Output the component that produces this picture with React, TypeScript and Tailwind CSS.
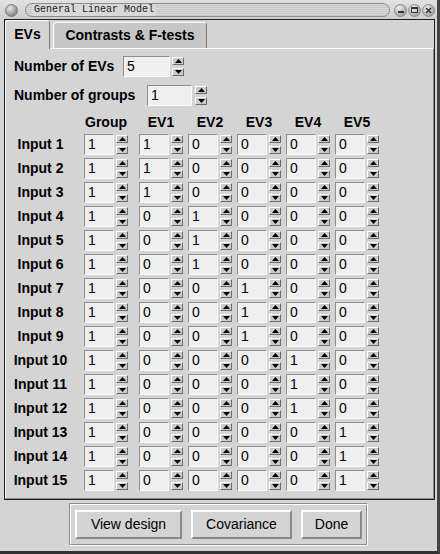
import { Fragment } from "react";

const ROWS = Array.from({ length: 15 }, (_, i) => {
  const hot = Math.floor(i / 3);
  return {
    label: `Input ${i + 1}`,
    group: "1",
    evs: [0, 1, 2, 3, 4].map((j) => (j === hot ? "1" : "0")),
  };
});

const HEADERS = ["Group", "EV1", "EV2", "EV3", "EV4", "EV5"];

function Arrow({ up }: { up?: boolean }) {
  return (
    <div className="flex h-[8px] w-[12px] items-center justify-center border border-t-white border-l-white border-r-[#6c6c6c] border-b-[#6c6c6c] bg-[#cbcbcb]">
      <svg width="7" height="4" viewBox="0 0 7 4">
        <polygon points={up ? "3.5,0 7,4 0,4" : "0,0 7,0 3.5,4"} fill="#000" />
      </svg>
    </div>
  );
}

function Spin({ value, w = 30, gap = 2 }: { value: string; w?: number; gap?: number }) {
  return (
    <div className="flex items-center" style={{ gap }}>
      <div
        className="h-[21px] border border-t-[#8e8e8e] border-l-[#8e8e8e] border-r-[#fafafa] border-b-[#fafafa] bg-[#efefef] pl-[3px] text-[14px] leading-[19px] text-black"
        style={{ width: w }}
      >
        {value}
      </div>
      <div className="flex h-[21px] flex-col justify-between py-[1px]">
        <Arrow up />
        <Arrow />
      </div>
    </div>
  );
}

function TitleBall({ children }: { children?: React.ReactNode }) {
  return (
    <div className="flex h-[13px] w-[13px] items-center justify-center rounded-full border border-[#8a8a8a] bg-[radial-gradient(circle_at_35%_30%,#f2f2f2,#a8a8a8_70%,#7a7a7a)]">
      {children}
    </div>
  );
}

function Button({ label, w }: { label: string; w: number }) {
  return (
    <div
      className="flex h-[29px] items-center justify-center border-2 border-t-white border-l-white border-r-[#8a8a8a] border-b-[#8a8a8a] bg-[#d4d4d4] text-[14px] text-black"
      style={{ width: w }}
    >
      {label}
    </div>
  );
}

export default function App() {
  return (
    <div className="flex h-[554px] w-[440px] flex-col overflow-hidden border-r-[3px] border-b-[3px] border-r-[#444] border-b-[#333] bg-[#d4d4d4] font-['Liberation_Sans',Arial,sans-serif] text-black">
      {/* title bar */}
      <div className="flex h-[19px] items-center bg-[linear-gradient(#e2e2e2,#cecece)] pl-[5px] pt-[1px]">
        <div className="h-[13px] w-[13px] rounded-full border border-[#7a7a7a] bg-[radial-gradient(circle_at_35%_30%,#e8e8e8,#9a9a9a_60%,#6a6a6a)]" />
        <div className="ml-[7px] flex h-[14px] w-[365px] items-center overflow-hidden rounded-full border border-[#8c8c8c] bg-[repeating-linear-gradient(to_bottom,#dadada_0px,#dadada_1px,#c6c6c6_1px,#c6c6c6_2px)] pl-[6px]">
          <span className="bg-[#d8d8d8] px-[2px] font-['Liberation_Mono',monospace] text-[10px] leading-[12px] text-[#222]">
            General Linear Model
          </span>
        </div>
        <div className="ml-[4px] flex gap-[1px]">
          <TitleBall>
            <div className="mt-[4px] h-[2px] w-[6px] bg-[#333]" />
          </TitleBall>
          <TitleBall>
            <div className="h-[6px] w-[7px] border border-t-2 border-[#333]" />
          </TitleBall>
          <TitleBall>
            <svg width="7" height="7" viewBox="0 0 7 7">
              <path d="M1 1 L6 6 M6 1 L1 6" stroke="#333" strokeWidth="1.6" />
            </svg>
          </TitleBall>
        </div>
      </div>

      {/* notebook frame */}
      <div className="ml-[4px] flex h-[481px] w-[431px] flex-col border border-[#1e1e1e]">
        <div className="flex h-[28px] items-end">
          <div className="relative z-10 -mb-px flex h-[29px] w-[45px] items-center justify-center rounded-t-[4px] border-t border-l border-r border-t-white border-l-white border-r-[#7a7a7a] bg-[#d4d4d4] pb-[2px] text-[14px] font-bold">
            EVs
          </div>
          <div className="ml-[3px] flex h-[26px] w-[154px] items-center justify-center rounded-t-[4px] border-t border-l border-r border-t-white border-l-white border-r-[#7a7a7a] bg-[#c6c6c6] text-[14px] font-bold">
            Contrasts &amp; F-tests
          </div>
        </div>

        <div className="flex-1 border border-t-white border-l-white border-r-[#8a8a8a] border-b-[#8a8a8a] px-[2px] pt-[5px]">
          <div className="ml-[6px] flex h-[24px] items-center">
            <div className="w-[109px] text-[14px] font-bold">Number of EVs</div>
            <Spin value="5" w={47} gap={2} />
          </div>
          <div className="ml-[6px] mt-[5px] flex h-[24px] items-center">
            <div className="w-[133px] text-[14px] font-bold">Number of groups</div>
            <Spin value="1" w={45} gap={3} />
          </div>

          <div className="mt-[5px] grid grid-cols-[65px_55px_55px_49px_49px_49px_49px] text-[14px]">
            <div className="h-[20px]" />
            {HEADERS.map((h) => (
              <div key={h} className="flex h-[20px] items-center justify-end">
                <div className="w-[44px] text-center font-bold">{h}</div>
              </div>
            ))}
            {ROWS.map((r) => (
              <Fragment key={r.label}>
                <div className="flex h-[24px] items-center justify-center font-bold">
                  {r.label}
                </div>
                <div className="flex h-[24px] items-center justify-end">
                  <Spin value={r.group} />
                </div>
                {r.evs.map((v, j) => (
                  <div key={j} className="flex h-[24px] items-center justify-end">
                    <Spin value={v} />
                  </div>
                ))}
              </Fragment>
            ))}
          </div>
        </div>
      </div>

      {/* buttons */}
      <div className="flex flex-1 justify-center pt-[3px]">
        <div className="h-[43px] border border-t-[#8c8c8c] border-l-[#8c8c8c] border-r-white border-b-white">
          <div className="flex h-full gap-[9px] border border-t-white border-l-white border-r-[#8c8c8c] border-b-[#8c8c8c] px-[4px] pt-[5px]">
            <Button label="View design" w={107} />
            <Button label="Covariance" w={101} />
            <Button label="Done" w={61} />
          </div>
        </div>
      </div>
    </div>
  );
}
